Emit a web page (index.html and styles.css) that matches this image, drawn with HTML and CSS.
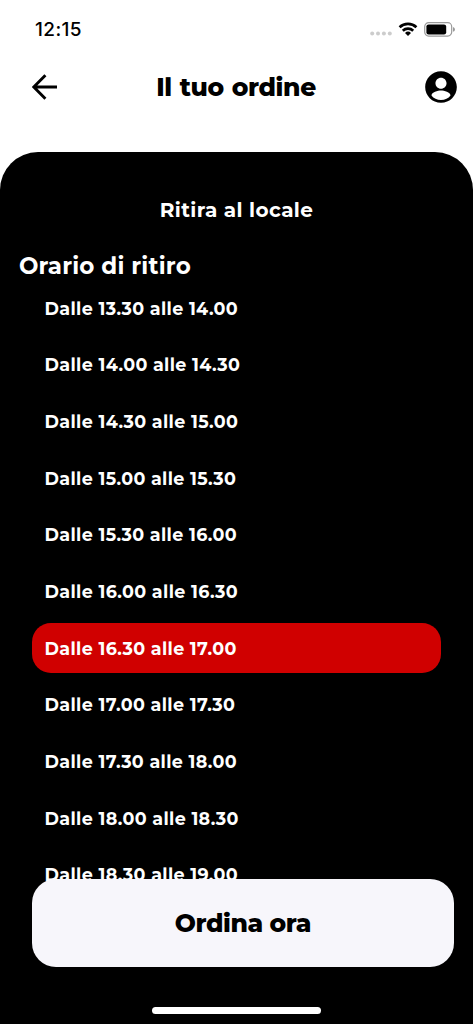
FILE: index.html
```html
<!DOCTYPE html>
<html lang="it">
<head>
<meta charset="utf-8">
<meta name="viewport" content="width=device-width, initial-scale=1">
<title>Il tuo ordine</title>
<link rel="stylesheet" href="styles.css">
</head>
<body>
<div class="status-bar">
  <span class="clock">12:15</span>
  <div class="indicators">
    <svg class="signal" width="22" height="5" viewBox="0 0 22 5"><circle cx="2.2" cy="2.5" r="2"/><circle cx="8" cy="2.5" r="2"/><circle cx="13.9" cy="2.5" r="2"/><circle cx="19.8" cy="2.5" r="2"/></svg>
    <svg class="wifi" width="20" height="15" viewBox="0 0 20 15"><g fill="none" stroke="#000" stroke-width="2.7"><path d="M1.6 5.2a12.1 12.1 0 0 1 16.8 0"/><path d="M4.8 8.7a7.5 7.5 0 0 1 10.4 0"/></g><path d="M10 14l-3-3a4.4 4.4 0 0 1 6 0z"/></svg>
    <svg class="battery" width="32" height="15" viewBox="0 0 32 15"><rect x=".7" y=".7" width="27" height="13.4" rx="4" fill="none" stroke="#999" stroke-width="1.2"/><rect x="2.4" y="2.4" width="19.8" height="10" rx="2.2"/><path d="M29 5q2 .6 2 2.4T29 9.8z" fill="#999"/></svg>
  </div>
</div>
<header class="header">
  <svg class="back" width="26" height="26" viewBox="0 0 26 26"><path d="M25 13H2M13.4 1.3L1.8 13l11.6 11.7" fill="none" stroke="#000" stroke-width="2.9"/></svg>
  <h1 class="title">Il tuo ordine</h1>
  <svg class="account" width="38" height="38" viewBox="0 0 24 24"><path d="M12 2C6.480 2 2 6.480 2 12s4.480 10 10 10 10-4.480 10-10S17.520 2 12 2zm0 4.100c1.930 0 3.500 1.570 3.500 3.500S13.930 13.100 12 13.100s-3.500-1.570-3.500-3.500S10.070 6.100 12 6.100zm0 14.100c-2.500 0-4.710-1.100-6-2.900.03-1.990 4-3.080 6-3.080 1.990 0 5.970 1.090 6 3.080-1.290 1.800-3.500 2.900-6 2.900z"/></svg>
</header>
<main class="panel">
  <h2 class="mode">Ritira al locale</h2>
  <h3 class="section">Orario di ritiro</h3>
  <ul class="slots">
    <li class="slot">Dalle 13.30 alle 14.00</li>
    <li class="slot">Dalle 14.00 alle 14.30</li>
    <li class="slot">Dalle 14.30 alle 15.00</li>
    <li class="slot">Dalle 15.00 alle 15.30</li>
    <li class="slot">Dalle 15.30 alle 16.00</li>
    <li class="slot">Dalle 16.00 alle 16.30</li>
    <li class="slot selected">Dalle 16.30 alle 17.00</li>
    <li class="slot">Dalle 17.00 alle 17.30</li>
    <li class="slot">Dalle 17.30 alle 18.00</li>
    <li class="slot">Dalle 18.00 alle 18.30</li>
    <li class="slot">Dalle 18.30 alle 19.00</li>
  </ul>
  <button class="order"><span class="order-label">Ordina ora</span></button>
  <div class="home-indicator"></div>
</main>
</body>
</html>
```
FILE: styles.css
```css
* { box-sizing: border-box; }
body {
  margin: 0;
  height: 1024px;
  display: flex;
  flex-direction: column;
  overflow: hidden;
  background: #fff;
  color: #000;
  font-family: Montserrat, Inter, sans-serif;
}
.status-bar {
  height: 58px;
  padding: 0 17px 0 35px;
  display: flex;
  align-items: center;
  justify-content: space-between;
}
.clock {
  padding-top: 2px;
  font: 500 19px/24px Inter, sans-serif;
  letter-spacing: 0.4px;
}
.indicators { display: flex; align-items: center; }
.signal { fill: #ccc; margin: 9px 6px 0 0; }
.wifi { margin-right: 6px; }
.header {
  height: 58px;
  padding: 0 13px 0 32px;
  display: grid;
  grid-template-columns: 38px 1fr 38px;
  align-items: center;
}
.title {
  margin: 0;
  padding-right: 20px;
  text-align: center;
  font-size: 25px;
  line-height: 30px;
  font-weight: 800;
  letter-spacing: -0.4px;
  word-spacing: 1.2px;
}
.panel {
  height: 872.5px;
  margin-top: 35.5px;
  padding-top: 43px;
  display: flex;
  flex-direction: column;
  border-radius: 38px 38px 0 0;
  background: #000;
  color: #fff;
}
.mode {
  margin: 0;
  text-align: center;
  font-size: 20px;
  line-height: 30px;
  font-weight: 700;
  letter-spacing: 0.4px;
}
.section {
  margin: 25px 0 0 19px;
  font-size: 23px;
  line-height: 32px;
  font-weight: 700;
  letter-spacing: 0.2px;
}
.slots {
  list-style: none;
  height: 624px;
  margin: 1px 0 0;
  padding: 0 32px;
  display: flex;
  flex-direction: column;
  gap: 6.4px;
}
.slot {
  flex: 0 0 50.3px;
  padding: 1px 0 0 12.5px;
  border-radius: 19px;
  font-size: 17.5px;
  line-height: 49.3px;
  font-weight: 700;
  letter-spacing: 0.36px;
}
.selected { background: #d00000; }
.order {
  position: relative;
  flex: 0 0 88px;
  margin: -28px 19.3px 0 32px;
  padding: 1px 0 0;
  border: 0;
  border-radius: 24px;
  background: #f7f6fb;
  color: #000;
  font: 800 25px/30px Montserrat, Inter, sans-serif;
  letter-spacing: -0.4px;
}
.home-indicator {
  width: 169px;
  height: 6.5px;
  margin: 40.5px auto 0;
  border-radius: 4px;
  background: #fff;
}
```
